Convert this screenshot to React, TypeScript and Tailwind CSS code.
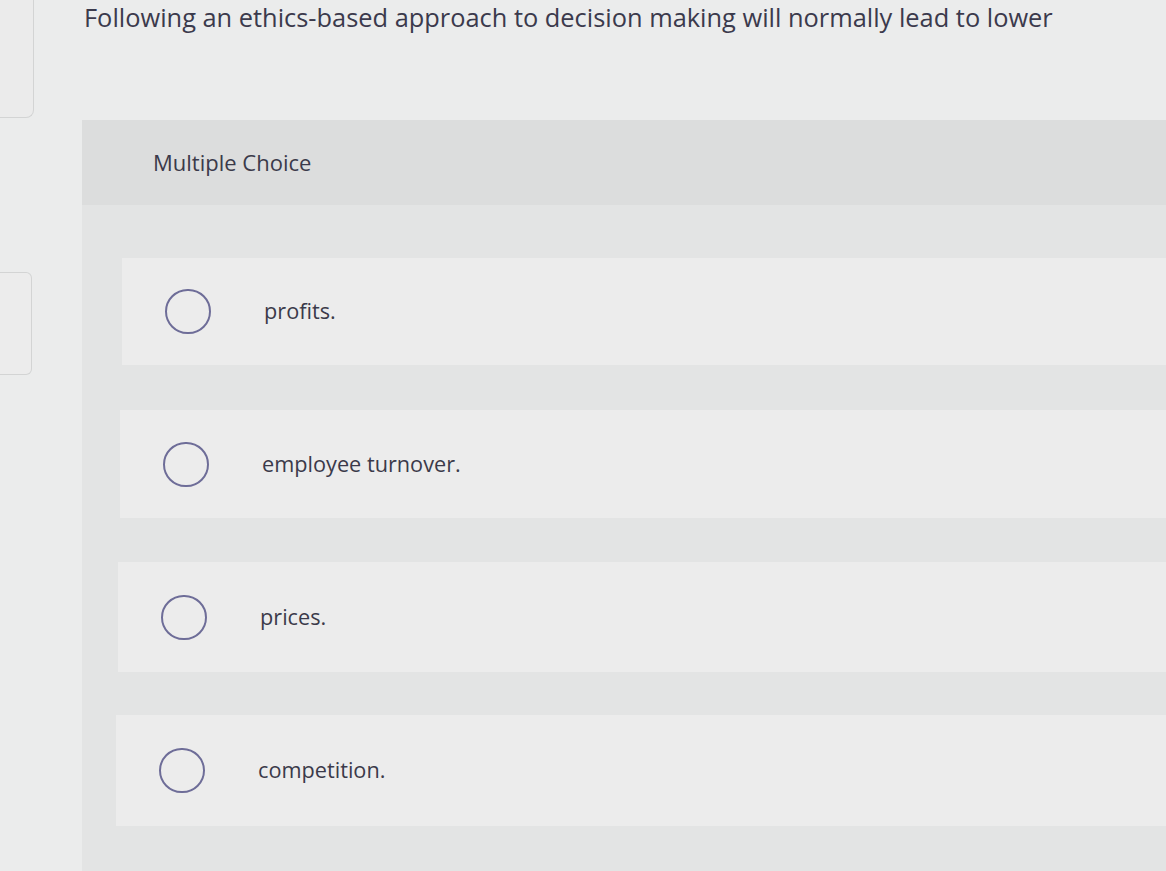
import React from "react";

const options = [
  { t: "profits.", cls: "ml-[40px] h-[107px]" },
  { t: "employee turnover.", cls: "ml-[38px] mt-[45px] h-[108px]" },
  { t: "prices.", cls: "ml-[36px] mt-[44px] h-[110px]" },
  { t: "competition.", cls: "ml-[34px] mt-[43px] h-[111px]" },
];

export default function App() {
  return (
    <div
      className="flex h-[871px] w-[1166px] overflow-hidden bg-[#ebecec] text-[#3a3a48]"
      style={{ fontFamily: "'Open Sans', Lato, sans-serif" }}
    >
      <div className="flex w-[82px] shrink-0 flex-col">
        <div className="h-[118px] w-[34px] rounded-br-[8px] border-b border-r border-[#d3d4d4] bg-[#ebebeb]" />
        <div className="mt-[154px] h-[103px] w-[32px] rounded-r-[6px] border-y border-r border-[#d3d4d4] bg-[#ececec]" />
      </div>
      <div className="flex min-w-0 flex-1 flex-col">
        <div className="h-[120px] pl-[2px] text-[25.4px] leading-[34px] font-[500] whitespace-nowrap text-[#3b3a4c]">
          Following an ethics-based approach to decision making will normally lead to lower
        </div>
        <div className="flex flex-1 flex-col bg-[#e3e4e4]">
          <div className="flex h-[85px] items-center bg-[#dcdddd] pl-[71px] text-[22px] font-[500] text-[#3b3a4a]">
            Multiple Choice
          </div>
          <div className="flex flex-col pt-[53px]">
            {options.map((o) => (
              <div
                key={o.t}
                className={`flex items-center bg-[#ececec] pl-[43px] ${o.cls}`}
              >
                <div className="h-[45px] w-[46px] shrink-0 rounded-full border-2 border-[#6e6d98]" />
                <div className="ml-[53px] text-[21.7px] font-[500] text-[#3b3a4a]">{o.t}</div>
              </div>
            ))}
          </div>
        </div>
      </div>
    </div>
  );
}
